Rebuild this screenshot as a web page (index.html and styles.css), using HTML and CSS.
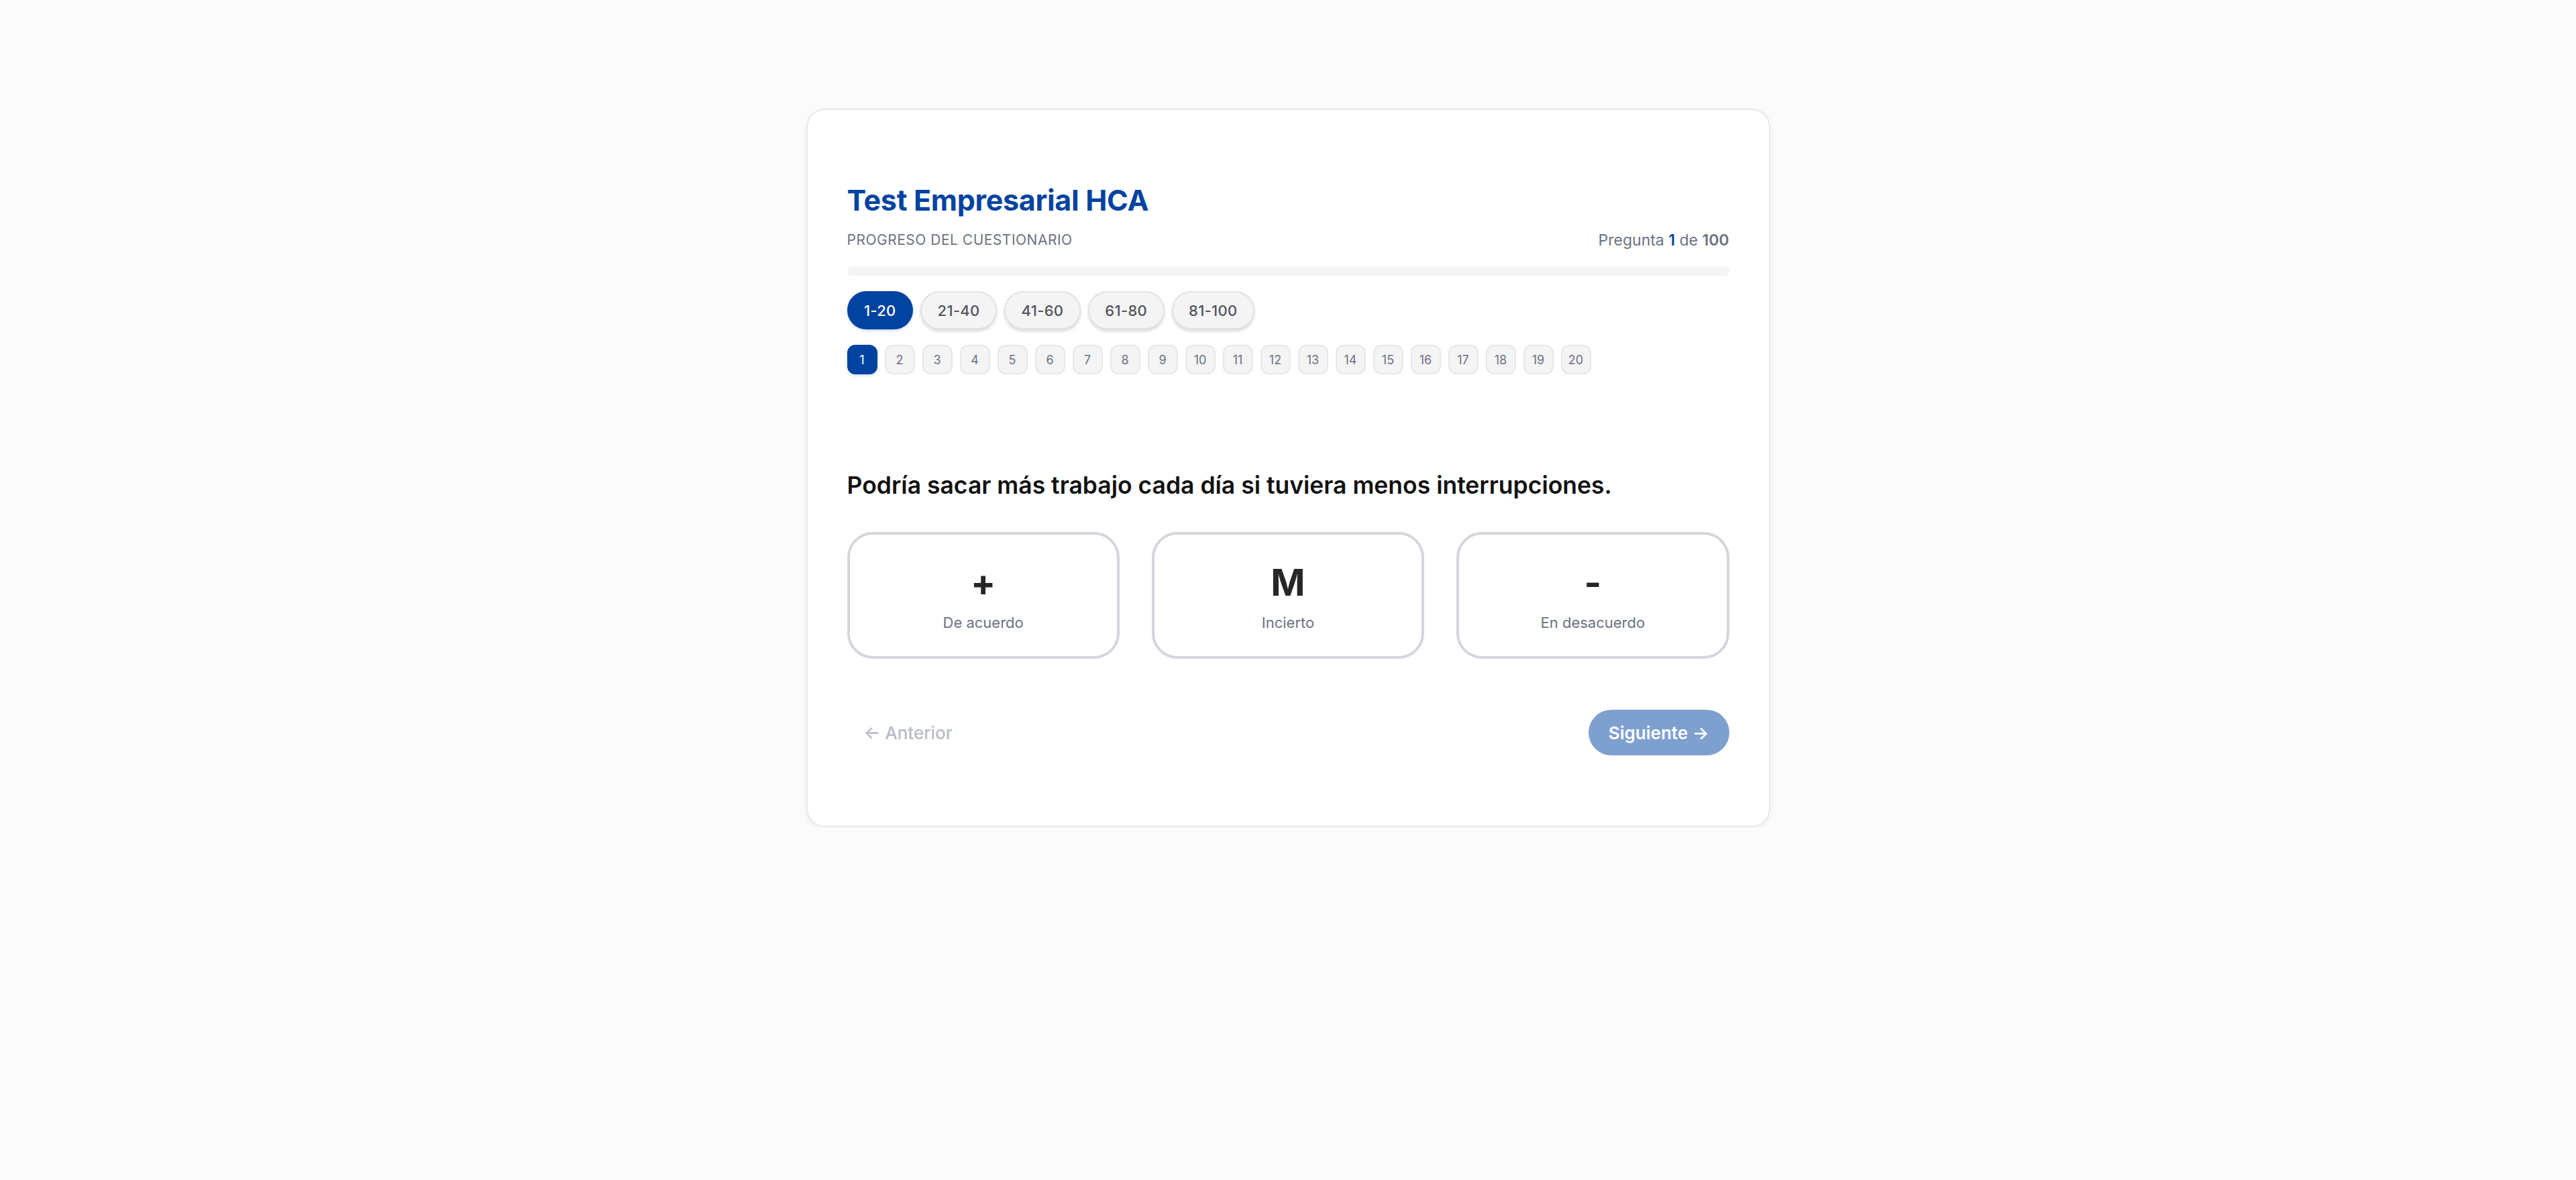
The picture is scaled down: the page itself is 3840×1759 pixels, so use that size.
FILE: index.html
```html
<!DOCTYPE html>
<html lang="es">
<head>
    <meta charset="UTF-8">
    <meta name="viewport" content="width=device-width, initial-scale=1.0">
    <title>Test Empresarial HCA</title>
    <link rel="stylesheet" href="styles.css">
</head>
<body>
    <main class="card">
        <!-- Header and progress -->
        <h1 class="title">Test Empresarial HCA</h1>
        <div class="progress-head">
            <span class="progress-label">Progreso del cuestionario</span>
            <span class="progress-count">Pregunta <b class="current">1</b> de <b>100</b></span>
        </div>
        <div class="progress-bar"><div class="progress-fill" style="width: 0%"></div></div>

        <!-- Question blocks -->
        <div class="ranges">
            <button class="range active">1-20</button>
            <button class="range">21-40</button>
            <button class="range">41-60</button>
            <button class="range">61-80</button>
            <button class="range">81-100</button>
        </div>
        <div class="numbers">
            <button class="number active">1</button>
            <button class="number">2</button>
            <button class="number">3</button>
            <button class="number">4</button>
            <button class="number">5</button>
            <button class="number">6</button>
            <button class="number">7</button>
            <button class="number">8</button>
            <button class="number">9</button>
            <button class="number">10</button>
            <button class="number">11</button>
            <button class="number">12</button>
            <button class="number">13</button>
            <button class="number">14</button>
            <button class="number">15</button>
            <button class="number">16</button>
            <button class="number">17</button>
            <button class="number">18</button>
            <button class="number">19</button>
            <button class="number">20</button>
        </div>

        <!-- Current question -->
        <h2 class="question">Podría sacar más trabajo cada día si tuviera menos interrupciones.</h2>
        <div class="options">
            <button class="option">
                <span class="option-symbol">+</span>
                <span class="option-label">De acuerdo</span>
            </button>
            <button class="option">
                <span class="option-symbol">M</span>
                <span class="option-label">Incierto</span>
            </button>
            <button class="option">
                <span class="option-symbol">-</span>
                <span class="option-label">En desacuerdo</span>
            </button>
        </div>

        <!-- Navigation -->
        <div class="nav">
            <button class="nav-prev" disabled>&larr; Anterior</button>
            <button class="nav-next" disabled>Siguiente &rarr;</button>
        </div>
    </main>
</body>
</html>
```
FILE: styles.css
```css
body {
    margin: 0;
    background-color: #fbfbfb;
    font-family: Inter, "Liberation Sans", sans-serif;
}
button {
    font-family: inherit;
    cursor: pointer;
}
.card {
    box-sizing: border-box;
    width: 1437px;
    margin: 162px auto 0;
    padding: 108px 59px 105px;
    background-color: #fff;
    border: 2px solid #e9e9ec;
    border-radius: 28px;
    box-shadow: 0 3px 8px rgba(0, 0, 0, 0.06);
}
.title {
    margin: 0;
    font-size: 43px;
    line-height: 53px;
    font-weight: 700;
    letter-spacing: -0.3px;
    color: #0043a0;
}
.progress-head {
    display: flex;
    justify-content: space-between;
    align-items: center;
    margin-top: 18px;
    line-height: 30px;
    color: #6b7280;
}
.progress-label {
    font-size: 21px;
    text-transform: uppercase;
    letter-spacing: 0.5px;
}
.progress-count {
    font-size: 23px;
}
.progress-count b {
    font-weight: 600;
}
.progress-count .current {
    color: #0043a0;
}
.progress-bar {
    margin-top: 24px;
    height: 14px;
    border-radius: 7px;
    background-color: #f3f4f6;
    overflow: hidden;
}
.progress-fill {
    height: 100%;
    background-color: #0043a0;
}
.ranges {
    display: flex;
    gap: 11px;
    margin-top: 23px;
}
.range {
    height: 57px;
    padding: 0 23.5px;
    border: 2px solid #e2e3e7;
    border-radius: 29px;
    background-color: #f4f4f5;
    color: #52525b;
    font-size: 22px;
    font-weight: 500;
    letter-spacing: 0.3px;
    box-shadow: 0 3px 4px rgba(0, 0, 0, 0.15);
}
.range.active {
    background-color: #0043a0;
    border-color: #0043a0;
    color: #fff;
    box-shadow: 0 2px 4px rgba(0, 67, 160, 0.2);
}
.numbers {
    display: flex;
    gap: 11px;
    margin-top: 23px;
}
.number {
    width: 45px;
    height: 44px;
    padding: 0;
    border: 2px solid #e6e7ea;
    border-radius: 12px;
    background-color: #f4f4f5;
    color: #6b7280;
    font-size: 18px;
}
.number.active {
    background-color: #0043a0;
    border-color: #0043a0;
    color: #fff;
    box-shadow: 0 2px 4px rgba(0, 67, 160, 0.2);
}
.question {
    margin: 144px 0 0;
    font-size: 35.5px;
    line-height: 44px;
    font-weight: 600;
    color: #111;
}
.options {
    display: grid;
    grid-template-columns: repeat(3, 1fr);
    gap: 48px;
    margin-top: 47px;
}
.option {
    box-sizing: border-box;
    height: 189px;
    display: flex;
    flex-direction: column;
    align-items: center;
    padding: 44px 0 0;
    border: 4px solid #d4d6dc;
    border-radius: 38px;
    background-color: #fff;
}
.option-symbol {
    font-size: 55px;
    line-height: 55px;
    font-weight: 700;
    color: #27272a;
}
.option-label {
    margin-top: 18px;
    font-size: 22px;
    line-height: 28px;
    color: #6b7280;
}
.nav {
    display: flex;
    justify-content: space-between;
    margin-top: 76px;
}
.nav-prev {
    height: 68px;
    padding: 0 25px;
    border: none;
    background: none;
    color: #b8bcc5;
    font-size: 26px;
    font-weight: 500;
}
.nav-next {
    height: 68px;
    padding: 0 30px;
    border: none;
    border-radius: 34px;
    background-color: #0043a0;
    opacity: 0.5;
    color: #fff;
    font-size: 26px;
    font-weight: 600;
}
```
